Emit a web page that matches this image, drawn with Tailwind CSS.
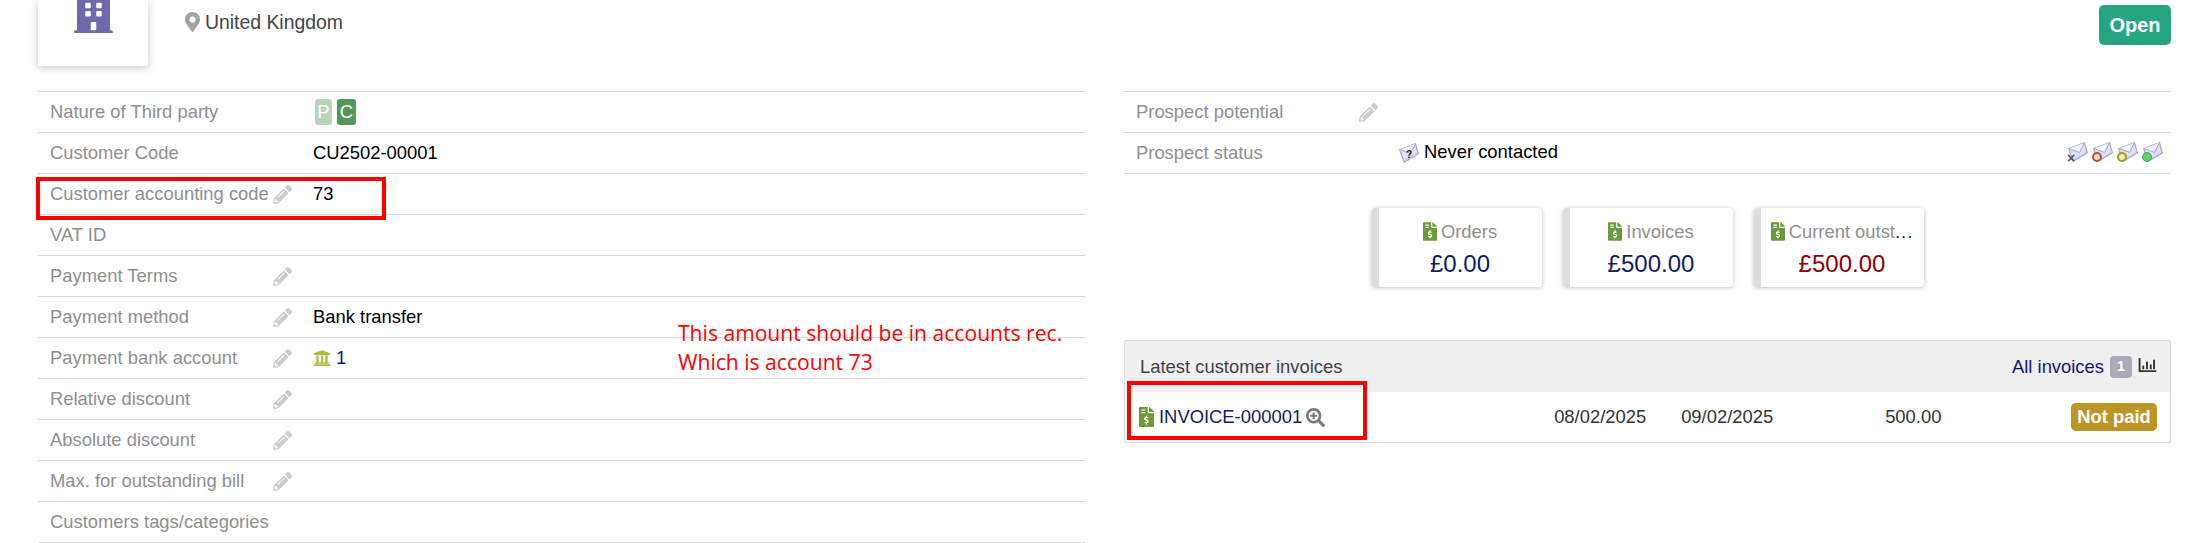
<!DOCTYPE html>
<html lang="en">
<head>
    <meta charset="UTF-8">
    <title>Third party card</title>
    <script src="https://cdn.jsdelivr.net/npm/@tailwindcss/browser@4"></script>
</head>
<body class="bg-white h-[543px] overflow-hidden relative font-['Liberation_Sans',sans-serif] text-[18.4px] text-black">

    <!-- icon defs -->
    <svg class="hidden">
        <symbol id="pencil" viewBox="0 0 512 512"><path fill="currentColor" d="M497.9 142.1l-46.1 46.1c-4.7 4.7-12.3 4.7-17 0l-111-111c-4.7-4.7-4.7-12.3 0-17l46.1-46.1c18.7-18.7 49.1-18.7 67.9 0l60.1 60.1c18.8 18.7 18.8 49.1 0 67.9zM284.2 99.8L21.6 362.4.4 483.9c-2.9 16.4 11.4 30.6 27.8 27.8l121.5-21.3 262.6-262.6c4.7-4.7 4.7-12.3 0-17l-111-111c-4.8-4.7-12.4-4.7-17.1 0zM124.1 339.9c-5.5-5.5-5.5-14.3 0-19.8l154-154c5.5-5.5 14.3-5.5 19.8 0s5.5 14.3 0 19.8l-154 154c-5.5 5.5-14.3 5.5-19.8 0zM88 424h48v36.3l-64.5 11.3-31.1-31.1L51.7 376H88v48z"/></symbol>
        <symbol id="invoice" viewBox="0 0 384 512"><path fill="currentColor" d="M377 105L279.1 7c-4.5-4.5-10.6-7-17-7H256v128h128v-6.1c0-6.3-2.5-12.4-7-16.9zm-153 31V0H24C10.7 0 0 10.7 0 24v464c0 13.3 10.7 24 24 24h336c13.3 0 24-10.7 24-24V160H248c-13.2 0-24-10.8-24-24zM64 72c0-4.42 3.58-8 8-8h80c4.42 0 8 3.58 8 8v16c0 4.42-3.58 8-8 8H72c-4.42 0-8-3.58-8-8V72zm0 80v-16c0-4.42 3.58-8 8-8h80c4.42 0 8 3.58 8 8v16c0 4.42-3.58 8-8 8H72c-4.42 0-8-3.58-8-8zm144 263.88V440c0 4.42-3.58 8-8 8h-16c-4.42 0-8-3.58-8-8v-24.29c-11.29-.58-22.27-4.52-31.37-11.35-3.9-2.93-4.1-8.77-.57-12.14l11.75-11.21c2.77-2.64 6.89-2.76 10.13-.73 3.87 2.42 8.26 3.72 12.82 3.72h28.11c6.5 0 11.8-5.92 11.8-13.19 0-5.95-3.61-11.19-8.77-12.73l-45-13.5c-18.59-5.58-31.58-23.42-31.58-43.39 0-24.52 19.05-44.44 42.67-45.07V232c0-4.42 3.58-8 8-8h16c4.42 0 8 3.58 8 8v24.29c11.29.58 22.27 4.51 31.37 11.35 3.9 2.93 4.1 8.77.57 12.14l-11.75 11.21c-2.77 2.64-6.89 2.76-10.13.73-3.87-2.43-8.26-3.72-12.82-3.72h-28.11c-6.5 0-11.8 5.92-11.8 13.19 0 5.95 3.61 11.19 8.77 12.73l45 13.5c18.59 5.58 31.58 23.42 31.58 43.39 0 24.53-19.05 44.44-42.67 45.07z"/></symbol>
        <symbol id="envelope" viewBox="0 0 20 20">
            <path d="M0.5 6.5 L16.5 0.5 L19.5 11 L5 19.5 Z" fill="#c4c6e6" stroke="#9a9dc8" stroke-width="0.9"/>
            <path d="M1.5 7 L16 1.5 L18 10 L5.5 17.5 Z" fill="#dfe1f4"/>
            <path d="M1 6.5 L11.5 10.5 L16.5 0.8" fill="#f1f2fb" stroke="#9a9dc8" stroke-width="0.9"/>
        </symbol>
    </svg>

    <!-- top bar -->
    <div class="flex items-start h-[91px] pl-[38px] pr-[15px]">
        <div class="w-[110px] h-[66px] bg-white shadow-[0_2px_8px_rgba(0,0,0,0.22)] flex justify-center items-end pb-[33px] shrink-0">
            <svg class="w-[39px] h-[44px] text-[#6c6aa8]" viewBox="0 0 448 512"><path fill="currentColor" d="M436 480h-20V24c0-13.255-10.745-24-24-24H56C42.745 0 32 10.745 32 24v456H12c-6.627 0-12 5.373-12 12v20h448v-20c0-6.627-5.373-12-12-12zM128 76c0-6.627 5.373-12 12-12h40c6.627 0 12 5.373 12 12v40c0 6.627-5.373 12-12 12h-40c-6.627 0-12-5.373-12-12V76zm0 96c0-6.627 5.373-12 12-12h40c6.627 0 12 5.373 12 12v40c0 6.627-5.373 12-12 12h-40c-6.627 0-12-5.373-12-12v-40zm52 148h-40c-6.627 0-12-5.373-12-12v-40c0-6.627 5.373-12 12-12h40c6.627 0 12 5.373 12 12v40c0 6.627-5.373 12-12 12zm76 160h-64v-84c0-6.627 5.373-12 12-12h40c6.627 0 12 5.373 12 12v84zm64-172c0 6.627-5.373 12-12 12h-40c-6.627 0-12-5.373-12-12v-40c0-6.627 5.373-12 12-12h40c6.627 0 12 5.373 12 12v40zm0-96c0 6.627-5.373 12-12 12h-40c-6.627 0-12-5.373-12-12v-40c0-6.627 5.373-12 12-12h40c6.627 0 12 5.373 12 12v40zm0-96c0 6.627-5.373 12-12 12h-40c-6.627 0-12-5.373-12-12V76c0-6.627 5.373-12 12-12h40c6.627 0 12 5.373 12 12v40z"/></svg>
        </div>
        <div class="flex items-center gap-[5px] ml-[37px] mt-[11px] text-[#444] text-[19.4px] leading-[22px]">
            <svg class="w-[15px] h-[20px] text-[#a3a3a3]" viewBox="0 0 384 512"><path fill="currentColor" d="M172.268 501.67C26.97 291.031 0 268.413 0 192 0 85.961 85.961 0 192 0s192 85.961 192 192c0 76.413-26.97 99.031-172.268 309.67-9.535 13.774-29.93 13.773-39.464 0zM192 272c44.183 0 80-35.817 80-80s-35.817-80-80-80-80 35.817-80 80 35.817 80 80 80z"/></svg>
            <span>United Kingdom</span>
        </div>
        <span class="ml-auto mt-[5px] h-[40px] w-[72px] rounded-[5px] bg-[#25a580] text-white font-bold text-[20px] flex items-center justify-center">Open</span>
    </div>

    <div class="flex pl-[38px] pr-[15px] gap-[39px]">

        <!-- left table -->
        <div class="w-[1047px] border-t border-[#d8d8d8] text-[#8f8f8f]">
            <div class="flex items-center h-[41px] border-b border-[#d8d8d8] pl-[12px]">
                <span class="w-[265px]">Nature of Third party</span>
                <span class="flex gap-[5px]">
                    <span class="w-[17px] h-[26px] rounded-[3px] bg-[#bbd5bc] text-white flex items-center justify-center">P</span>
                    <span class="w-[19px] h-[26px] rounded-[3px] bg-[#55985a] text-white flex items-center justify-center">C</span>
                </span>
            </div>
            <div class="flex items-center h-[41px] border-b border-[#d8d8d8] pl-[12px]">
                <span class="w-[263px]">Customer Code</span>
                <span class="text-black">CU2502-00001</span>
            </div>
            <div class="flex items-center h-[41px] border-b border-[#d8d8d8] pl-[12px]">
                <span class="w-[223px] whitespace-nowrap">Customer accounting code</span>
                <svg class="w-[19px] h-[19px] text-[#ccc]"><use href="#pencil"/></svg>
                <span class="text-black ml-[21px]">73</span>
            </div>
            <div class="flex items-center h-[41px] border-b border-[#d8d8d8] pl-[12px]">
                <span class="w-[223px]">VAT ID</span>
            </div>
            <div class="flex items-center h-[41px] border-b border-[#d8d8d8] pl-[12px]">
                <span class="w-[223px]">Payment Terms</span>
                <svg class="w-[19px] h-[19px] text-[#ccc]"><use href="#pencil"/></svg>
            </div>
            <div class="flex items-center h-[41px] border-b border-[#d8d8d8] pl-[12px]">
                <span class="w-[223px]">Payment method</span>
                <svg class="w-[19px] h-[19px] text-[#ccc]"><use href="#pencil"/></svg>
                <span class="text-black ml-[21px]">Bank transfer</span>
            </div>
            <div class="flex items-center h-[41px] border-b border-[#d8d8d8] pl-[12px]">
                <span class="w-[223px]">Payment bank account</span>
                <svg class="w-[19px] h-[19px] text-[#ccc]"><use href="#pencil"/></svg>
                <svg class="w-[18px] h-[18px] text-[#b3b83c] ml-[21px]" viewBox="0 0 512 512"><path fill="currentColor" d="M496 128v16a8 8 0 0 1-8 8h-24v12c0 6.627-5.373 12-12 12H60c-6.627 0-12-5.373-12-12v-12H24a8 8 0 0 1-8-8v-16a8 8 0 0 1 4.941-7.392l232-88a7.996 7.996 0 0 1 6.118 0l232 88A8 8 0 0 1 496 128zm-24 304H40c-13.255 0-24 10.745-24 24v16a8 8 0 0 0 8 8h464a8 8 0 0 0 8-8v-16c0-13.255-10.745-24-24-24zM96 192v192H60c-6.627 0-12 5.373-12 12v20h416v-20c0-6.627-5.373-12-12-12h-36V192h-64v192h-64V192h-64v192h-64V192H96z"/></svg>
                <span class="text-[#121a6b] ml-[5px]">1</span>
            </div>
            <div class="flex items-center h-[41px] border-b border-[#d8d8d8] pl-[12px]">
                <span class="w-[223px]">Relative discount</span>
                <svg class="w-[19px] h-[19px] text-[#ccc]"><use href="#pencil"/></svg>
            </div>
            <div class="flex items-center h-[41px] border-b border-[#d8d8d8] pl-[12px]">
                <span class="w-[223px]">Absolute discount</span>
                <svg class="w-[19px] h-[19px] text-[#ccc]"><use href="#pencil"/></svg>
            </div>
            <div class="flex items-center h-[41px] border-b border-[#d8d8d8] pl-[12px]">
                <span class="w-[223px]">Max. for outstanding bill</span>
                <svg class="w-[19px] h-[19px] text-[#ccc]"><use href="#pencil"/></svg>
            </div>
            <div class="flex items-center h-[41px] border-b border-[#d8d8d8] pl-[12px]">
                <span class="w-[263px]">Customers tags/categories</span>
            </div>
        </div>

        <!-- right column -->
        <div class="w-[1047px]">
            <div class="border-t border-[#d8d8d8] text-[#8f8f8f]">
                <div class="flex items-center h-[41px] border-b border-[#d8d8d8] pl-[12px]">
                    <span class="w-[223px]">Prospect potential</span>
                    <svg class="w-[19px] h-[19px] text-[#ccc]"><use href="#pencil"/></svg>
                </div>
                <div class="flex items-center h-[41px] border-b border-[#d8d8d8] pl-[12px] pr-[8px]">
                    <span class="w-[263px]">Prospect status</span>
                    <svg class="w-[20px] h-[20px]" viewBox="0 0 20 20"><use href="#envelope"/><text x="7" y="15" font-size="10" font-weight="700" fill="#222">?</text></svg>
                    <span class="text-black ml-[5px] -mt-[2px]">Never contacted</span>
                    <div class="ml-auto flex gap-[5px] -mt-[2px]">
                        <span class="relative w-[20px] h-[20px]"><svg class="w-[20px] h-[20px]"><use href="#envelope"/></svg><span class="absolute -left-[1px] -bottom-[1px] text-[#555] text-[14px] leading-[10px] font-bold">×</span></span>
                        <span class="relative w-[20px] h-[20px]"><svg class="w-[20px] h-[20px]"><use href="#envelope"/></svg><span class="absolute -left-[1px] bottom-0 w-[10px] h-[10px] rounded-full bg-[#f4d3c8] border-2 border-[#b5532c]"></span></span>
                        <span class="relative w-[20px] h-[20px]"><svg class="w-[20px] h-[20px]"><use href="#envelope"/></svg><span class="absolute -left-[1px] bottom-0 w-[10px] h-[10px] rounded-full bg-[#f3eeb8] border-2 border-[#a89a1e]"></span></span>
                        <span class="relative w-[20px] h-[20px]"><svg class="w-[20px] h-[20px]"><use href="#envelope"/></svg><span class="absolute -left-[1px] bottom-0 w-[10px] h-[10px] rounded-full bg-[#5fd06a] border border-[#3fa84b]"></span></span>
                    </div>
                </div>
            </div>

            <!-- stat cards -->
            <div class="flex justify-center gap-[21px] mt-[34px]">
                <div class="w-[170px] h-[79px] bg-white rounded-[4px] border-l-[7px] border-[#ddd] shadow-[0_1px_5px_rgba(0,0,0,0.25)] flex flex-col items-center pt-[10px]">
                    <div class="flex items-center gap-[4px] text-[#8f8f8f]"><svg class="w-[14px] h-[19px] text-[#6b9a3c]"><use href="#invoice"/></svg><span>Orders</span></div>
                    <div class="text-[24px] leading-[28px] mt-[4px] text-[#121a6b]">£0.00</div>
                </div>
                <div class="w-[170px] h-[79px] bg-white rounded-[4px] border-l-[7px] border-[#ddd] shadow-[0_1px_5px_rgba(0,0,0,0.25)] flex flex-col items-center pt-[10px]">
                    <div class="flex items-center gap-[4px] text-[#8f8f8f]"><svg class="w-[14px] h-[19px] text-[#6b9a3c]"><use href="#invoice"/></svg><span>Invoices</span></div>
                    <div class="text-[24px] leading-[28px] mt-[4px] text-[#121a6b]">£500.00</div>
                </div>
                <div class="w-[170px] h-[79px] bg-white rounded-[4px] border-l-[7px] border-[#ddd] shadow-[0_1px_5px_rgba(0,0,0,0.25)] flex flex-col items-center pt-[10px]">
                    <div class="flex items-center gap-[4px] text-[#8f8f8f] whitespace-nowrap"><svg class="w-[14px] h-[19px] text-[#6b9a3c]"><use href="#invoice"/></svg><span>Current outst<span class="text-[#121a6b] tracking-[1px]">...</span></span></div>
                    <div class="text-[24px] leading-[28px] mt-[4px] text-[#8b0000]">£500.00</div>
                </div>
            </div>

            <!-- latest invoices -->
            <div class="mt-[53px] h-[103px] border border-[#d8d8d8] rounded-[2px]">
                <div class="flex items-center h-[51px] bg-[#f0f0f0] pl-[15px] pr-[13px] text-[#3f3f4d]">
                    <span>Latest customer invoices</span>
                    <span class="ml-auto text-[#121a6b]">All invoices</span>
                    <span class="ml-[6px] w-[22px] h-[22px] rounded-[4px] bg-[#aaaabb] text-white text-[15px] font-bold flex items-center justify-center">1</span>
                    <svg class="ml-[6px] -mt-[4px] w-[19px] h-[14px] text-[#333]" viewBox="0 0 19 15"><path fill="currentColor" d="M0 0h2v13h17v2H0z M4 8h2v4H4z M8 4h2v8H8z M12 7h2v5h-2z M15.5 2h2v10h-2z"/></svg>
                </div>
                <div class="flex items-center h-[50px] pl-[14px] pr-[13px] text-[#333]">
                    <svg class="w-[15px] h-[20px] text-[#6b9a3c]"><use href="#invoice"/></svg>
                    <span class="ml-[5px] text-[#121a6b]">INVOICE-000001</span>
                    <svg class="ml-[4px] w-[19px] h-[19px] text-[#7a7a7a]" viewBox="0 0 512 512"><path fill="currentColor" d="M304 192v32c0 6.6-5.4 12-12 12h-56v56c0 6.6-5.4 12-12 12h-32c-6.6 0-12-5.4-12-12v-56h-56c-6.6 0-12-5.4-12-12v-32c0-6.6 5.4-12 12-12h56v-56c0-6.6 5.4-12 12-12h32c6.6 0 12 5.4 12 12v56h56c6.6 0 12 5.4 12 12zm201 284.7L476.7 505c-9.4 9.4-24.6 9.4-33.9 0L343 405.3c-4.5-4.5-7-10.6-7-17V372c-35.3 27.6-79.7 44-128 44C93.1 416 0 322.9 0 208S93.1 0 208 0s208 93.1 208 208c0 48.3-16.4 92.7-44 128h16.3c6.4 0 12.5 2.5 17 7l99.7 99.7c9.3 9.4 9.3 24.6 0 34zM344 208c0-75.2-60.8-136-136-136S72 132.8 72 208s60.8 136 136 136 136-60.8 136-136z"/></svg>
                    <span class="ml-[229px] w-[127px]">08/02/2025</span>
                    <span class="w-[204px]">09/02/2025</span>
                    <span>500.00</span>
                    <span class="ml-auto w-[86px] h-[28px] rounded-[5px] bg-[#bc9526] text-white font-bold flex items-center justify-center">Not paid</span>
                </div>
            </div>
        </div>
    </div>

    <!-- annotations on top of the screenshot -->
    <div class="absolute left-[36px] top-[177px] w-[350px] h-[43px] border-[4px] border-[#f00]"></div>
    <div class="absolute left-[1127px] top-[381px] w-[240px] h-[59px] border-[4px] border-[#f00]"></div>
    <div class="absolute left-[678px] top-[318px] font-['Open_Sans',sans-serif] text-[21.1px] leading-[29px] text-[#f00]">This amount should be in accounts rec.<br>Which is account 73</div>

</body>
</html>
